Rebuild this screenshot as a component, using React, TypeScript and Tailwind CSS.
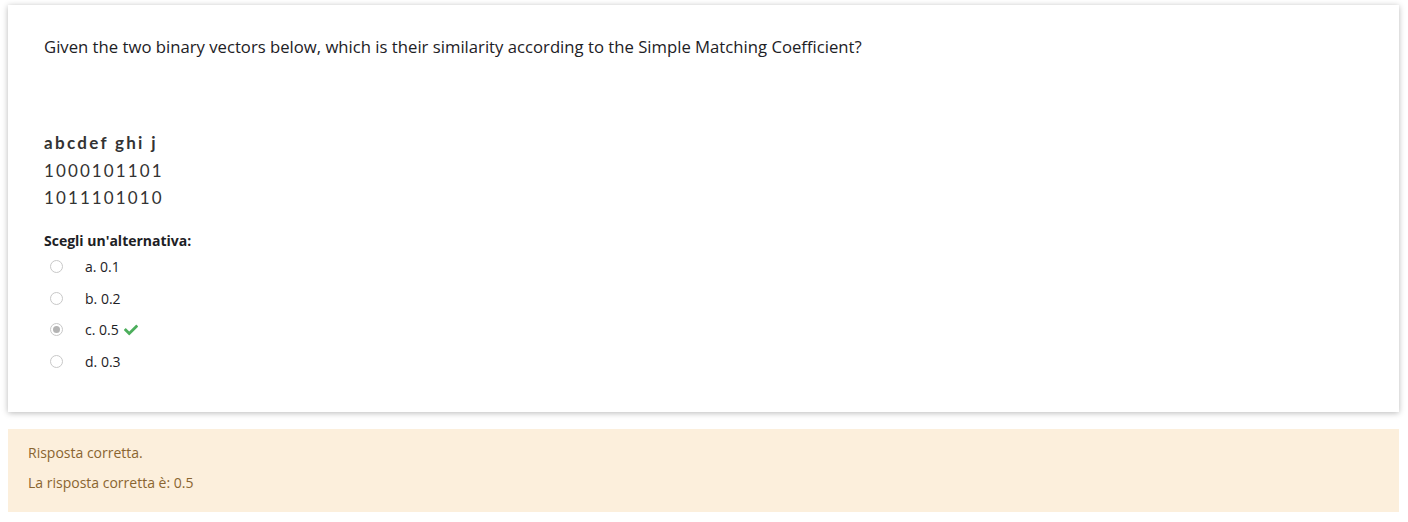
type Option = { key: string; value: string; checked?: boolean; correct?: boolean };

const options: Option[] = [
  { key: "a", value: "0.1" },
  { key: "b", value: "0.2" },
  { key: "c", value: "0.5", checked: true, correct: true },
  { key: "d", value: "0.3" },
];

function Radio({ checked }: { checked?: boolean }) {
  return (
    <span className="flex h-[13px] w-[13px] items-center justify-center rounded-full border border-[#c8c8c8] bg-white">
      {checked && <span className="h-[7px] w-[7px] rounded-full bg-[#b4b4b4]" />}
    </span>
  );
}

// solid check mark, font-awesome style
function CheckMark() {
  return (
    <svg viewBox="0 0 512 512" className="ml-[5px] h-[14px] w-[14px] fill-[#4cae5c]">
      <path d="M173.9 439.4l-166.4-166.4c-10-10-10-26.2 0-36.2l36.2-36.2c10-10 26.2-10 36.2 0L192 312.7 432.1 72.6c10-10 26.2-10 36.2 0l36.2 36.2c10 10 10 26.2 0 36.2L210.1 439.4c-10 10-26.2 10-36.2 0z" />
    </svg>
  );
}

export default function App() {
  return (
    <div
      className="min-h-[522px] bg-white pl-2 pr-[9px] pt-[5px] text-[#1d2125]"
      style={{ fontFamily: '"Open Sans", "Noto Sans", sans-serif' }}
    >
      <div className="bg-white px-9 pb-[35px] pt-[30px] shadow-[0_1px_6px_rgba(0,0,0,0.28)]">
        <p className="text-[16.7px] leading-6">
          Given the two binary vectors below, which is their similarity according to the Simple Matching Coefficient?
        </p>

        <div className="mt-[70px] text-[17px] leading-[27.5px] tracking-[2.1px] text-[#333]" style={{ fontFamily: "Lato, sans-serif" }}>
          <div className="font-bold tracking-[2.3px]">abcdef ghi j</div>
          <div>1000101101</div>
          <div>1011101010</div>
        </div>

        <div className="mt-[19px] text-[14px] font-bold leading-5">Scegli un'alternativa:</div>

        <div className="flex flex-col">
          {options.map((o) => (
            <div key={o.key} className="flex h-[31.7px] items-center text-[14px]">
              <span className="ml-[6px] mr-[22px] flex">
                <Radio checked={o.checked} />
              </span>
              <span>
                {o.key}. {o.value}
              </span>
              {o.correct && <CheckMark />}
            </div>
          ))}
        </div>
      </div>

      <div className="mt-[17px] bg-[#fcefdc] px-5 pb-[14px] pt-[9px] text-[14px] leading-[30px] text-[#8a6530]">
        <p>Risposta corretta.</p>
        <p>La risposta corretta è: 0.5</p>
      </div>
    </div>
  );
}
